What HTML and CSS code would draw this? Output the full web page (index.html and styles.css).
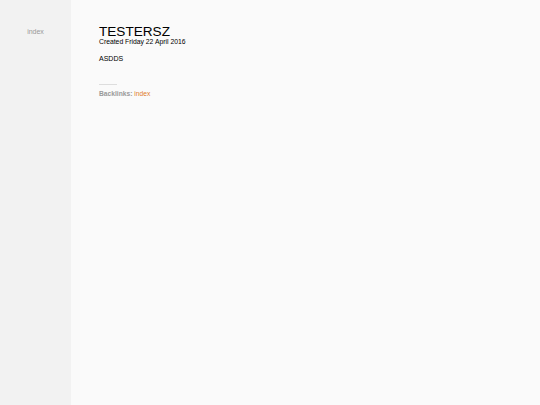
FILE: index.html
```html
<!DOCTYPE html>
<html>
<head>
<meta charset="utf-8">
<link rel="stylesheet" href="styles.css">
</head>
<body>
<div class="layout">
  <nav class="sidebar"><a class="navlink" href="#">index</a></nav>
  <main class="content">
    <h1 class="title">TESTERSZ</h1>
    <div class="created">Created Friday 22 April 2016</div>
    <p class="body">ASDDS</p>
    <hr class="sep">
    <div class="backlinks"><b>Backlinks:</b> <a href="#">index</a></div>
  </main>
</div>
</body>
</html>
```
FILE: styles.css
```css
html, body { margin: 0; padding: 0; height: 100%; }
body { font-family: "Liberation Sans", Arial, sans-serif; background: #fafafa; color: #000; }
.layout { display: flex; min-height: 405px; }
.sidebar { width: 71px; background: #f2f2f2; padding-top: 27px; text-align: center; box-sizing: border-box; font-size: 7px; line-height: 9px; }
.navlink { color: #999; text-decoration: none; }
.content { padding: 25px 0 0 28px; flex: 1; }
.title { font-size: 13.6px; font-weight: normal; margin: 0; line-height: 13px; }
.created { font-size: 6.8px; line-height: 8px; margin-top: 0; }
.body { font-size: 7px; margin: 8px 0 0; line-height: 9px; }
.sep { width: 18px; height: 0; margin: 21px 0 0; border: 0; border-top: 1px solid #ddd; }
.backlinks { font-size: 6.7px; line-height: 8px; color: #999; margin-top: 5px; }
.backlinks b { font-weight: bold; }
.backlinks a { color: #e07b2a; text-decoration: none; font-weight: normal; }
```
